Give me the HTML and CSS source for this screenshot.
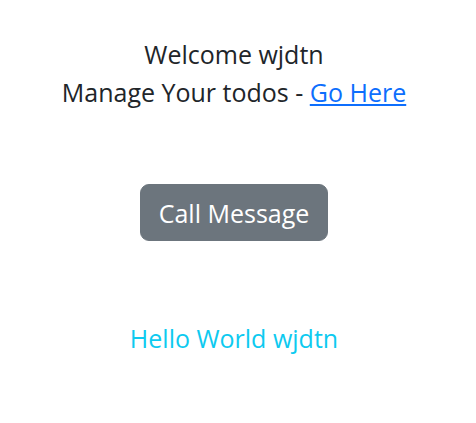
FILE: index.html
```html
<!DOCTYPE html>
<html lang="en">
<head>
  <meta charset="UTF-8">
  <meta name="viewport" content="width=device-width, initial-scale=1.0">
  <title>Todos</title>
  <link rel="stylesheet" href="styles.css">
</head>
<body>
  <div class="welcome-container">
    <div class="welcome-header">
      <p>Welcome wjdtn</p>
      <p>Manage Your todos - <a href="#">Go Here</a></p>
    </div>

    <div class="message-actions">
      <button type="button" class="message-button">Call Message</button>
    </div>

    <div class="message-result">Hello World wjdtn</div>
  </div>
</body>
</html>
```

FILE: styles.css
```css
:root {
  --text-primary: #212529;
  --link-color: #0d6efd;
  --btn-secondary: #6c757d;
  --text-info: #0dcaf0;
}

* {
  box-sizing: border-box;
  margin: 0;
  padding: 0;
}

body {
  font-family: 'Open Sans', 'Noto Sans', sans-serif;
  font-size: 25px;
  line-height: 38px;
  color: var(--text-primary);
  background-color: #ffffff;
}

.welcome-container {
  display: flex;
  flex-direction: column;
  align-items: center;
  text-align: center;
  padding: 35px 8px 0 0;
}

.welcome-header a {
  color: var(--link-color);
  text-decoration: underline;
}

.message-actions {
  margin-top: 73px;
}

.message-button {
  font-family: inherit;
  font-size: 25px;
  line-height: 36px;
  padding: 9.5px 18px;
  color: #ffffff;
  background-color: var(--btn-secondary);
  border: 1px solid var(--btn-secondary);
  border-radius: 9px;
  cursor: pointer;
}

.message-result {
  margin-top: 78px;
  color: var(--text-info);
}
```
